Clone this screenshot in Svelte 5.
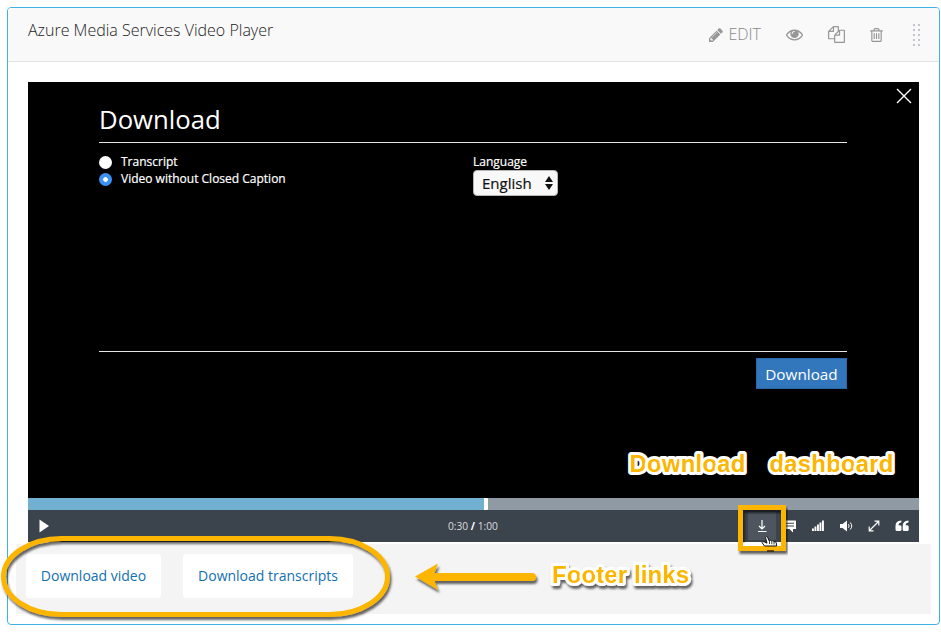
<script>
  let choice = $state('video');
  const options = [
    { id: 'transcript', label: 'Transcript' },
    { id: 'video', label: 'Video without Closed Caption' }
  ];
  const links = ['Download video', 'Download transcripts'];
  const played = 51.65;
</script>

<main>
  <section class="card">
    <header>
      <h1>Azure Media Services Video Player</h1>
      <nav>
        <button class="edit" aria-label="Edit">
          <svg width="14" height="14" viewBox="0 128 1536 1536"><path d="M363 1536l91-91-235-235-91 91v107h128v128h107zM886 608q0-22-22-22-10 0-17 7l-542 542q-7 7-7 17 0 22 22 22 10 0 17-7l542-542q7-7 7-17zM832 416l416 416-832 832H0v-416zM1515 512q0 53-37 90l-166 166-416-416 166-165q36-38 90-38 53 0 91 38l235 234q37 39 37 91z" /></svg>
          <span>EDIT</span>
        </button>
        <button class="eye" aria-label="Visibility">
          <svg width="17" height="12" viewBox="0 384 1792 1152"><path d="M1664 960q-152-236-381-353 61 104 61 225 0 185-131.500 316.500t-316.500 131.500-316.500-131.500-131.500-316.500q0-121 61-225-229 117-381 353 133 205 333.500 326.500t434.500 121.500 434.500-121.500 333.500-326.500zM944 576q0-20-14-34t-34-14q-125 0-214.500 89.500t-89.500 214.500q0 20 14 34t34 14 34-14 14-34q0-86 61-147t147-61q20 0 34-14t14-34zM1792 960q0 34-20 69-140 230-376.500 368.500t-499.500 138.500-499.500-139-376.500-368q-20-35-20-69t20-69q140-229 376.500-368t499.500-139 499.500 139 376.500 368q20 35 20 69z" /></svg>
        </button>
        <button class="copy" aria-label="Duplicate">
          <svg width="17" height="17" viewBox="0 0 1792 1792"><path d="M1696 384q40 0 68 28t28 68v1216q0 40-28 68t-68 28h-960q-40 0-68-28t-28-68v-288h-544q-40 0-68-28t-28-68v-672q0-40 20-88t48-76l408-408q28-28 76-48t88-20h416q40 0 68 28t28 68v328q68-40 128-40h416zM1152 597l-299 299h299v-299zM512 213l-299 299h299v-299zM708 860l316-316v-416h-384v416q0 40-28 68t-68 28h-416v640h512v-256q0-40 20-88t48-76zM1664 1664v-1152h-384v416q0 40-28 68t-68 28h-416v640h896z" /></svg>
        </button>
        <button class="trash" aria-label="Delete">
          <svg width="13" height="14" viewBox="256 128 1408 1536"><path d="M1408 1460v-948h-896v948q0 22 7 40.5t14.500 27 10.500 8.500h832q3 0 10.500-8.500t14.500-27 7-40.500zM736 384h448l-48-117q-7-9-17-11h-317q-10 2-17 11zM1664 416v64q0 14-9 23t-23 9h-96v948q0 83-47 143.500t-113 60.500h-832q-66 0-113-58.500t-47-141.500v-952h-96q-14 0-23-9t-9-23v-64q0-14 9-23t23-9h309l70-167q15-37 54-63t79-26h320q40 0 79 26t54 63l70 167h309q14 0 23 9t9 23z" /><path d="M640 704h128v640H640zM896 704h128v640H896zM1152 704h128v640h-128z" /></svg>
        </button>
        <div class="grip">
          {#each Array(10) as _}<i></i>{/each}
        </div>
      </nav>
    </header>

    <div class="player">
      <div class="screen">
        <svg class="close" width="16" height="16" viewBox="0 0 16 16"><path d="M1 1L15 15M15 1L1 15" fill="none" stroke="#fff" stroke-width="1.4" /></svg>
        <h2>Download</h2>
        <div class="form">
          <div class="choices">
            {#each options as o}
              <button class="radio" onclick={() => (choice = o.id)}>
                <span class="dot" class:on={choice === o.id}></span>{o.label}
              </button>
            {/each}
          </div>
          <div class="lang">
            <span>Language</span>
            <div class="select">
              English
              <svg width="8" height="14" viewBox="0 0 8 14"><path d="M4 0L8 6H0zM4 14L0 8H8z" fill="#111" /></svg>
            </div>
          </div>
        </div>
        <button class="go">Download</button>
      </div>
      <div class="progress"><div class="done" style="width: {played}%"></div></div>
      <div class="controls">
        <svg class="play" width="10" height="14" viewBox="0 0 10 14"><path d="M.5 .5L10 7L.5 13.500z" fill="#fff" /></svg>
        <div class="time">0:30 <b>/</b> 1:00</div>
        <div class="icons">
          <span class="active"><svg width="12" height="14" viewBox="0 0 12 14"><path d="M6 1V10M3 7L6 10L9 7M2 12.500H10.500" fill="none" stroke="#fff" stroke-width="1.200" /></svg></span>
          <span><svg width="14" height="14" viewBox="0 0 14 14"><path d="M2 1.500H12.500Q13 1.500 13 2V9.500Q13 10 12.500 10H10V13.500L6.500 10H2Q1.500 10 1.500 9.500V2Q1.500 1.500 2 1.500Z" fill="#fff" /><path d="M3 4.300H11M3 7H11" stroke="#3b444d" stroke-width="1.100" /></svg></span>
          <span><svg width="14" height="14" viewBox="0 0 14 14"><path d="M1 9.500h1.900V12H1zM3.500 7.500h1.900V12H3.500zM6 5.500h1.900V12H6zM8.500 3.500h1.900V12H8.500zM11 1.500h1.900V12H11z" fill="#fff" /></svg></span>
          <span><svg width="14" height="14" viewBox="0 0 14 14"><path d="M1 5H3.500L8 1.500V12.500L3.500 9H1z" fill="#fff" /><path d="M9.500 5.200Q10.700 7 9.500 8.800M11.200 3.500Q14.300 7 11.200 10.500" fill="none" stroke="#fff" stroke-width="1" /></svg></span>
          <span><svg width="14" height="14" viewBox="0 0 14 14"><path d="M2.500 11.500L11.500 2.500M7.500 2.200H11.800V6.500M2.200 7.500V11.800H6.500" fill="none" stroke="#fff" stroke-width="1.200" /></svg></span>
          <span><svg width="14" height="14" viewBox="0 0 14 14"><path d="M6.300 1.500V3.500Q3.500 3.800 3.500 6.300H5Q6.500 6.300 6.500 7.800V10.500Q6.500 12 5 12H2Q.5 12 .5 10.500V7Q.5 1.800 6.300 1.500ZM13.500 1.500V3.500Q10.700 3.800 10.700 6.300H12.200Q13.700 6.300 13.700 7.800V10.500Q13.700 12 12.200 12H9.200Q7.700 12 7.700 10.500V7Q7.700 1.800 13.500 1.500Z" fill="#fff" /></svg></span>
        </div>
      </div>
    </div>

    <footer>
      {#each links as l}<a href="#top">{l}</a>{/each}
    </footer>
  </section>

  <svg class="notes" width="941" height="633" viewBox="0 0 941 633">
    <defs>
      <filter id="shade" x="-10%" y="-40%" width="120%" height="200%">
        <feDropShadow dx="1.500" dy="3" stdDeviation="1.300" flood-color="#000" flood-opacity=".6" />
      </filter>
    </defs>
    <g filter="url(#shade)">
      <rect x="3.500" y="538.500" width="384" height="76" rx="58" ry="38" fill="none" stroke="#fcb500" stroke-width="5" />
    </g>
    <g filter="url(#shade)">
      <rect x="740.500" y="507.500" width="43" height="41" fill="none" stroke="#fcb500" stroke-width="5" />
    </g>
    <path d="M743 542.500H781V546H743z" fill="#fff" />
    <path d="M764.500 546L762 542.500Q762.200 541.200 764 541.700L767 543.200L765.500 537.500Q766.200 535.800 767.500 537.200L769.300 541Q770.600 539.400 771.600 541Q773 540 773.900 541.600Q775.600 541 776.300 543L776.500 546Z" fill="#fff" stroke="#111" stroke-width="1" />
    <path d="M769.500 541V544M771.800 541.300V544.200M774 542V544.500" stroke="#111" stroke-width=".8" />
    <path d="M767 551H774" stroke="#33270a" stroke-width="2" opacity=".75" />
    <g filter="url(#shade)">
      <path d="M415 576.500L438 563.500L434.500 573H532Q536 573 536 577Q536 581 532 581H434.500L438 590Z" fill="#fcb500" />
    </g>
    <g class="tag">
      <text x="629.500" y="472" textLength="116">Download</text>
      <text x="769.500" y="472" textLength="124">dashboard</text>
      <text x="552" y="582.700" textLength="137" filter="url(#shade)">Footer links</text>
    </g>
  </svg>
</main>

<style>
  :global(body) { margin: 0; background: #fff; }
  main { position: relative; width: 941px; height: 633px; overflow: hidden; box-sizing: border-box; padding: 7px 1px 0 7px; font-family: "Open Sans", sans-serif; }
  button { border: 0; padding: 0; margin: 0; background: none; font: inherit; color: inherit; display: flex; align-items: center; }
  svg { display: block; flex: none; }
  .card { box-sizing: border-box; height: 618px; border: 1px solid #3fb1e5; border-radius: 4px; overflow: hidden; }
  header { height: 53px; border-bottom: 1px solid #e4e4e4; background: #f9f9f9; display: flex; justify-content: space-between; align-items: flex-start; padding: 0 19px 0 20px; }
  h1 { margin: 10px 0 0; font-size: 16px; line-height: 24px; font-weight: 300; color: #222; white-space: nowrap; }
  nav { display: flex; align-items: center; height: 53px; fill: #979797; color: #888; }
  .edit { font-size: 16px; gap: 5px; font-weight: 300; }
  .edit span { padding-bottom: 2px; }
  .eye { margin-left: 25px; }
  .copy { margin-left: 25px; }
  .trash { margin-left: 25px; }
  .grip { margin-left: 29px; display: grid; grid-template-columns: 2px 2px; gap: 3px; }
  .grip { margin-left: 29px; column-gap: 3px; padding-left: 1px; }
  .grip i { width: 2px; height: 2px; background: #c4c4cc; }
  .player { margin: 20px 20px 0; width: 891px; }
  .screen { position: relative; height: 416px; background: #000; color: #fff; box-sizing: border-box; padding: 16px 72px 0 71px; }
  .close { position: absolute; right: 7px; top: 6px; }
  h2 { margin: 0; height: 44px; border-bottom: 1px solid #e6e6e6; font-weight: 400; font-size: 25.700px; line-height: 43px; }
  .form { height: 208px; border-bottom: 1px solid #e6e6e6; display: flex; font-size: 12px; line-height: 17px; -webkit-text-stroke: .2px; }
  .choices { width: 374px; padding-top: 10px; }
  .radio { height: 17px; font-size: 12px; white-space: nowrap; }
  .dot { width: 13px; height: 13px; border-radius: 50%; background: #fff; margin: 1px 9px 0 0; }
  .dot.on { background: radial-gradient(circle, #fff 0 2px, #3b92f5 2.600px); }
  .lang { padding-top: 10px; }
  .select { box-sizing: border-box; width: 85px; height: 26px; border: 1px solid #b5b5b5; background: #f8f8f8; border-radius: 4px; display: flex; align-items: center; justify-content: space-between; padding: 0 4px 0 8px; color: #111; font-size: 15px; }
  .go { margin: 6px 0 0 auto; width: 91px; height: 31px; background: #3276bc; border: 1px solid #2a68aa; justify-content: center; font-size: 15.300px; }
  .progress { height: 12px; background: #8f9aa5; }
  .done { box-sizing: border-box; height: 12px; background: #72b0d1; border-right: 4px solid #fff; border-radius: 0 1px 1px 0; }
  .controls { height: 32px; background: #3b444d; display: flex; align-items: center; padding: 0 3px 0 11px; }
  .play { width: 10px; }
  .time { margin-left: 399px; width: 60px; font-size: 10.200px; color: #ddd; white-space: nowrap; }
  .time b { color: #fff; }
  .icons { margin-left: auto; display: flex; }
  .icons span { width: 28px; height: 28px; display: flex; align-items: center; justify-content: center; }
  .icons .active { background: #4e555f; }
  footer { margin: 2px 8px 0; width: 915px; height: 70px; box-sizing: border-box; background: #f4f4f4; padding: 10px; display: flex; align-items: flex-start; gap: 22px; }
  footer a { height: 44px; line-height: 44px; width: 135px; text-align: center; background: #fff; border-radius: 3px; color: #126fb0; text-decoration: none; font-size: 14px; white-space: nowrap; }
  footer a + a { width: 170px; }
  .notes { position: absolute; left: 0; top: 0; pointer-events: none; }
  .tag text { font: bold 24px "Liberation Sans", Arial, sans-serif; fill: #fcb500; stroke: #fff; stroke-width: 6px; stroke-linejoin: round; paint-order: stroke; }
</style>
